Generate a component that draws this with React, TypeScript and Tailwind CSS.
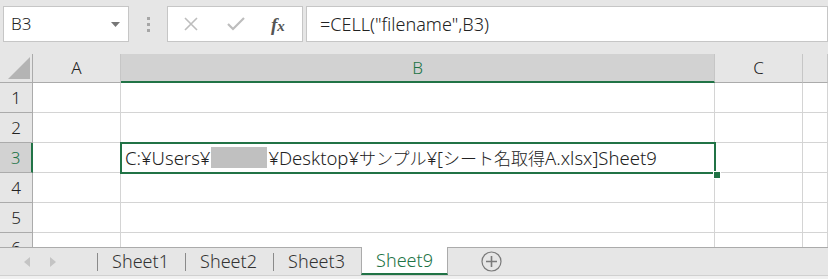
import React from "react";

const rows = [1, 2, 3, 4, 5, 6];
const tabs = ["Sheet1", "Sheet2", "Sheet3"];

function Corner() {
  return (
    <div className="relative h-full border-r border-b border-[#ababab] bg-[#e6e6e6]">
      <svg width="33" height="29" className="absolute left-0 top-0">
        <polygon points="8,25 30,25 30,3" fill="#b4b4b4" />
      </svg>
    </div>
  );
}

function ColHeader({ label, active }: { label: string; active?: boolean }) {
  return (
    <div
      className={`flex items-center justify-center h-full text-[17px] font-light ${
        active
          ? "bg-[#d2d2d2] text-[#217346] border-b-2 border-b-[#217346] border-r border-r-[#c6c6c6]"
          : "bg-[#e6e6e6] text-[#222] border-b border-[#ababab] border-r border-r-[#c6c6c6]"
      }`}
    >
      {label}
    </div>
  );
}

function RowHeader({ n, active }: { n: number; active?: boolean }) {
  return (
    <div
      className={`flex items-center justify-center h-full text-[17px] font-light border-b border-b-[#ababab] ${
        active
          ? "bg-[#d2d2d2] text-[#217346] border-r-2 border-r-[#217346]"
          : "bg-[#e6e6e6] text-[#222] border-r border-r-[#ababab]"
      }`}
    >
      {n}
    </div>
  );
}

function Cell({ children }: { children?: React.ReactNode }) {
  return (
    <div className="h-full border-r border-b border-[#d4d4d4] bg-white flex items-center overflow-visible whitespace-nowrap">
      {children}
    </div>
  );
}

// Japanese runs are set a little smaller than the Latin ones, like Yu Gothic in Excel
function Jp({ children }: { children: React.ReactNode }) {
  return (
    <span className="text-[17px]" style={{ fontFamily: '"Noto Sans CJK JP", sans-serif' }}>
      {children}
    </span>
  );
}

export default function App() {
  return (
    <div
      className="w-[828px] h-[279px] overflow-hidden bg-[#e6e6e6] flex flex-col font-light"
      style={{ fontFamily: '"Noto Sans", "Noto Sans CJK JP", sans-serif' }}
    >
      {/* formula bar */}
      <div className="h-[54px] shrink-0 flex items-start pt-[6px] pl-[3px]">
        <div className="w-[126px] h-[36px] bg-white border border-[#c6c6c6] flex items-center justify-between pl-[7px] pr-[8px]">
          <span className="text-[17px] text-[#222]">B3</span>
          <svg width="9" height="5"><polygon points="0,0 9,0 4.5,5" fill="#777" /></svg>
        </div>
        <div className="w-[38px] h-[36px] flex flex-col items-center justify-center gap-[3px]">
          <span className="w-[3px] h-[3px] bg-[#a6a6a6]" />
          <span className="w-[3px] h-[3px] bg-[#a6a6a6]" />
          <span className="w-[3px] h-[3px] bg-[#a6a6a6]" />
        </div>
        <div className="w-[136px] h-[36px] bg-white border border-[#c6c6c6] flex items-center">
          <svg width="16" height="16" className="ml-[15px]" viewBox="0 0 16 16">
            <path d="M2 2 L14 14 M14 2 L2 14" stroke="#bdbdbd" strokeWidth="1.6" />
          </svg>
          <svg width="18" height="16" className="ml-[28px]" viewBox="0 0 18 16">
            <path d="M1 8 L6 13 L17 2" stroke="#bdbdbd" strokeWidth="2.2" fill="none" />
          </svg>
          <span
            className="ml-[26px] text-[19px] italic font-bold text-[#555] leading-none"
            style={{ fontFamily: '"Liberation Serif", serif' }}
          >
            f<span className="text-[15px]">x</span>
          </span>
        </div>
        <div className="w-[3px]" />
        <div className="flex-1 h-[36px] bg-white border border-[#c6c6c6] flex items-center pl-[13px]">
          <span className="text-[18px] text-[#222]">=CELL("filename",B3)</span>
        </div>
      </div>

      {/* grid */}
      <div className="relative h-[193px] shrink-0 overflow-hidden">
        <div className="grid grid-cols-[33px_88px_594px_88px_1fr] grid-rows-[29px_30px_30px_30px_30px_30px_30px]">
          <Corner />
          <ColHeader label="A" />
          <ColHeader label="B" active />
          <ColHeader label="C" />
          <ColHeader label="" />
          {rows.map((n) => (
            <React.Fragment key={n}>
              <RowHeader n={n} active={n === 3} />
              <Cell />
              <Cell>
                {n === 3 && (
                  <span className="pl-[4px] text-[18.5px] text-[#222] flex items-center">
                    C:¥Users¥
                    <span className="inline-block w-[56px] h-[21px] bg-[#c0c0c0] mx-[1px]" />
                    ¥Desktop¥<Jp>サンプル</Jp>¥[<Jp>シート名取得</Jp>A.xlsx]Sheet9
                  </span>
                )}
              </Cell>
              <Cell />
              <Cell />
            </React.Fragment>
          ))}
        </div>
        {/* selection */}
        <div className="absolute left-[120px] top-[88px] w-[596px] h-[32px] border-2 border-[#217346] pointer-events-none" />
        <div className="absolute left-[713px] top-[117px] w-[6px] h-[6px] bg-[#217346] border border-white box-content" />
      </div>

      {/* sheet tabs */}
      <div className="h-[28px] shrink-0 flex items-stretch border-t border-[#ababab] bg-[#e6e6e6]">
        <div className="w-[97px] flex items-center pl-[24px] gap-[20px]">
          <svg width="6" height="10"><polygon points="6,0 6,10 0,5" fill="#c4c4c4" /></svg>
          <svg width="6" height="10"><polygon points="0,0 0,10 6,5" fill="#c4c4c4" /></svg>
        </div>
        {tabs.map((t) => (
          <div key={t} className="w-[88px] flex items-center">
            <span className="w-px h-[18px] bg-[#8a8a8a]" />
            <span className="flex-1 text-center text-[18px] text-[#333] pr-[2px]">{t}</span>
          </div>
        ))}
        <div className="w-[87px] -mt-px bg-white border-l border-r border-[#ababab] border-b-2 border-b-[#217346] flex items-center justify-center">
          <span className="text-[18px] text-[#217346]">Sheet9</span>
        </div>
        <div className="flex items-center pl-[33px]">
          <svg width="21" height="21" viewBox="0 0 21 21">
            <circle cx="10.5" cy="10.5" r="9.5" fill="none" stroke="#7a7a7a" strokeWidth="1.2" />
            <path d="M10.5 5 V16 M5 10.5 H16" stroke="#7a7a7a" strokeWidth="1.6" />
          </svg>
        </div>
      </div>
      <div className="flex-1 border-t border-[#d0d0d0] bg-[#f0f0f0]" />
    </div>
  );
}
